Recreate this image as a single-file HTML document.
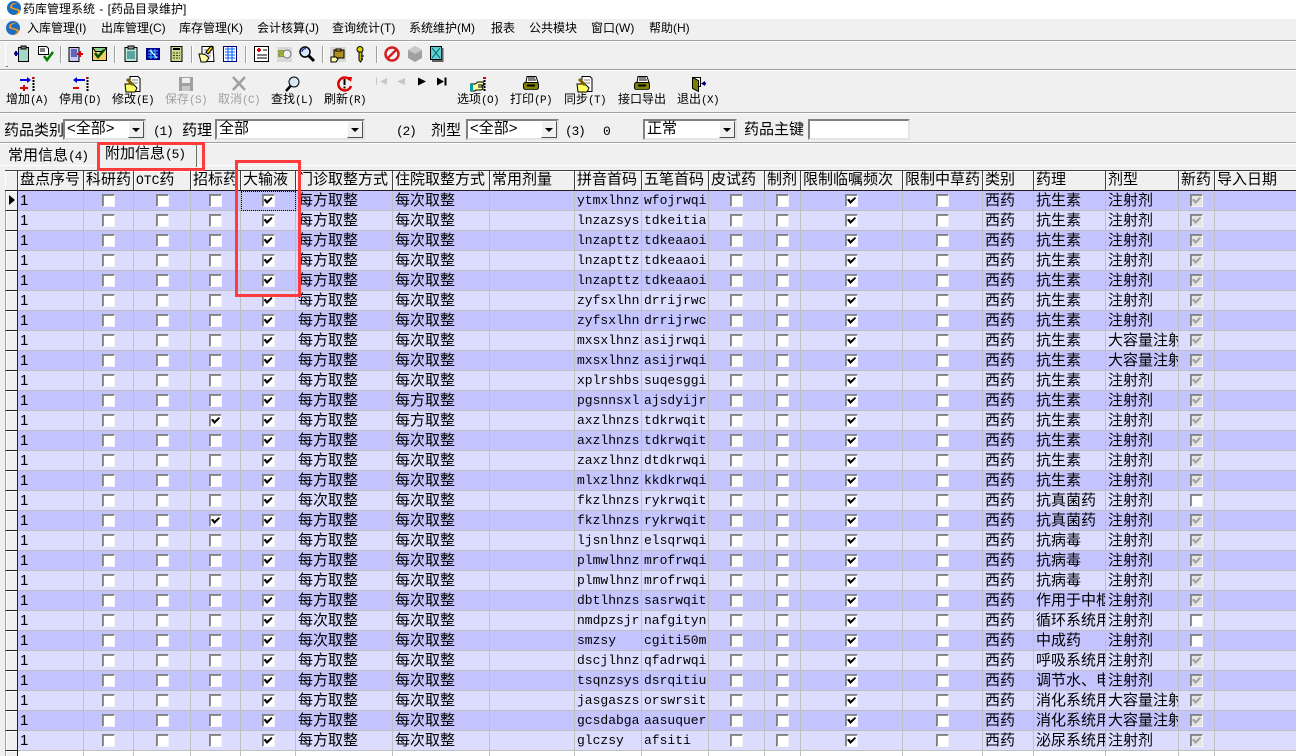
<!DOCTYPE html>
<html lang="zh"><head><meta charset="utf-8"><title>药库管理系统</title>
<style>
html,body{margin:0;padding:0;width:1296px;height:756px;overflow:hidden;background:#f0f0f0;color:#000;font-family:"Liberation Sans","WenQuanYi Zen Hei","Noto Sans CJK SC",sans-serif;font-size:12px}
#w{position:relative;width:1296px;height:756px;overflow:hidden;background:#f0f0f0}
.a{position:absolute;white-space:nowrap}
.ln{position:absolute;left:0;width:1296px;height:1px;background:#a0a0a0;box-shadow:0 1px 0 #fff}
.m{top:21px;font-size:12px;line-height:14px}
.v{position:absolute;top:46px;width:1px;height:17px;background:#a0a0a0;box-shadow:1px 0 0 #fff}
.t{top:91px;font-size:12px;line-height:16px}
.t b{font:400 11px "Liberation Mono",monospace;letter-spacing:-.6px}
.t.o{color:#a0a0a0}
.f{top:122px;font-size:15px;line-height:18px}
.f b{font:400 13px "Liberation Mono",monospace;letter-spacing:-1.3px}
.cb{position:absolute;top:119px;height:21px;box-sizing:border-box;background:#fff;border:2px solid #808080;border-right-color:#e4e4e4;border-bottom-color:#e4e4e4;font-size:15px;line-height:16px;padding-left:2px;white-space:nowrap}
.cb u{position:absolute;right:0;top:0;width:16px;height:17px;background:#f0f0f0;box-sizing:border-box;border:1px solid;border-color:#fff #505050 #505050 #fff}
.cb u:after{content:"";position:absolute;left:3px;top:6px;border:4px solid transparent;border-top:4px solid #000;border-bottom:0}
table{position:absolute;left:5px;top:170px;border-collapse:separate;border-spacing:0;table-layout:fixed;width:1381px;font-size:15px;line-height:19px;background:#fff}
td,th{box-sizing:border-box;height:20px;padding:0 0 0 2px;border-right:1px solid #c0c0c0;border-bottom:1px solid #c0c0c0;overflow:hidden;white-space:nowrap;font-weight:400;text-align:left;vertical-align:top}
th{height:21px;background:#f0f0f0;border-top:1px solid #404040;border-bottom:1px solid #202020;border-right:1px solid #404040;box-shadow:inset 1px 1px 0 #fff;padding-left:2px;line-height:18px}
tr td:first-child{background:#f0f0f0;border-right:1px solid #202020;border-bottom:1px solid #202020;border-left:1px solid #a0a0a0;padding:0;position:relative;box-shadow:inset 1px 1px 0 #fff}
tr{background:#dcdcff}
tr.d{background:#c4c4ff}
tr.w{background:#fff}
td.p{font:13px/19px "Liberation Mono",monospace}
td.k{padding:3px 0 0;text-align:center;line-height:13px}
td.s{outline:1px dotted #000;outline-offset:-1px}
i{display:inline-block;position:relative;width:13px;height:13px;box-sizing:border-box;background:#fff;border:1px solid;border-color:#808080 #f4f4f4 #f4f4f4 #808080;box-shadow:inset 1px 1px 0 #909090;vertical-align:top}
i.c:after,i.g:after{content:"";position:absolute;left:1px;top:2px;width:9px;height:7px;background:#000;clip-path:polygon(0 40%,25% 25%,38% 55%,88% 0,100% 20%,38% 100%)}
i.g{background:#e6e6e6}
i.g:after{background:#a0a0a0}
.r{position:absolute;border:3px solid #ff3b3b;box-sizing:border-box}
svg{position:absolute;left:0;top:0}
</style></head><body><div id="w">
<div class="a" style="left:0;top:0;width:1296px;height:19px;background:#fff"></div>
<div class="a" style="left:23px;top:1px;font-size:12px;line-height:16px;word-spacing:1px">药库管理系统 - [药品目录维护]</div>
<div class="a m" style="left:27px">入库管理(I)</div>
<div class="a m" style="left:101px">出库管理(C)</div>
<div class="a m" style="left:179px">库存管理(K)</div>
<div class="a m" style="left:257px">会计核算(J)</div>
<div class="a m" style="left:332px">查询统计(T)</div>
<div class="a m" style="left:409px">系统维护(M)</div>
<div class="a m" style="left:491px">报表</div>
<div class="a m" style="left:529px">公共模块</div>
<div class="a m" style="left:591px">窗口(W)</div>
<div class="a m" style="left:649px">帮助(H)</div>
<div class="ln" style="top:40px"></div>
<div class="ln" style="top:69px"></div>
<div class="ln" style="top:112px"></div>
<div class="ln" style="top:142px"></div>
<div class="a" style="left:5px;top:43px;width:2px;height:22px;border:1px solid;border-color:#fff #808080 #808080 #fff;border-right:0"></div>
<div class="v" style="left:60px"></div><div class="v" style="left:114px"></div><div class="v" style="left:191px"></div><div class="v" style="left:245px"></div><div class="v" style="left:322px"></div><div class="v" style="left:376px"></div>
<div class="a t" style="left:6px">增加<b>(A)</b></div>
<div class="a t" style="left:59px">停用<b>(D)</b></div>
<div class="a t" style="left:112px">修改<b>(E)</b></div>
<div class="a t o" style="left:165px">保存<b>(S)</b></div>
<div class="a t o" style="left:218px">取消<b>(C)</b></div>
<div class="a t" style="left:271px">查找<b>(L)</b></div>
<div class="a t" style="left:324px">刷新<b>(R)</b></div>
<div class="a t" style="left:457px">选项<b>(O)</b></div>
<div class="a t" style="left:510px">打印<b>(P)</b></div>
<div class="a t" style="left:564px">同步<b>(T)</b></div>
<div class="a t" style="left:618px">接口导出</div>
<div class="a t" style="left:677px">退出<b>(X)</b></div>
<div class="a f" style="left:4px">药品类别</div>
<div class="cb" style="left:63px;width:83px">&lt;全部&gt;<u></u></div>
<div class="a f" style="left:153px"><b>(1)</b></div>
<div class="a f" style="left:182px">药理</div>
<div class="cb" style="left:215px;width:150px">全部<u></u></div>
<div class="a f" style="left:396px"><b>(2)</b></div>
<div class="a f" style="left:431px">剂型</div>
<div class="cb" style="left:466px;width:93px">&lt;全部&gt;<u></u></div>
<div class="a f" style="left:565px"><b>(3)</b></div>
<div class="a f" style="left:603px"><b>0</b></div>
<div class="cb" style="left:643px;width:94px">正常<u></u></div>
<div class="a f" style="left:744px;top:121px">药品主键</div>
<div class="cb" style="left:808px;width:102px"></div>
<div class="a" style="left:0;top:165px;width:1296px;height:1px;background:#fff"></div>
<div class="a" style="left:8px;top:147px;font-size:15px;line-height:18px">常用信息<span style="font:13px 'Liberation Mono',monospace;letter-spacing:-1.2px">(4)</span></div>
<div class="a" style="left:97px;top:143px;width:98px;height:23px;background:#f0f0f0;border-left:1px solid #fff;border-top:1px solid #fff;border-right:1px solid #707070"></div>
<div class="a" style="left:105px;top:145px;font-size:15px;line-height:18px">附加信息<span style="font:13px 'Liberation Mono',monospace;letter-spacing:-1.2px">(5)</span></div>

<table><colgroup><col style="width:13px"><col style="width:66px"><col style="width:50px"><col style="width:57px"><col style="width:50px"><col style="width:55px"><col style="width:97px"><col style="width:97px"><col style="width:85px"><col style="width:67px"><col style="width:67px"><col style="width:56px"><col style="width:36px"><col style="width:102px"><col style="width:80px"><col style="width:51px"><col style="width:72px"><col style="width:73px"><col style="width:36px"><col style="width:171px"></colgroup>
<tr><th></th><th>盘点序号</th><th>科研药</th><th><span style="font:13px 'Liberation Mono',monospace">OTC</span>药</th><th>招标药</th><th>大输液</th><th>门诊取整方式</th><th>住院取整方式</th><th>常用剂量</th><th>拼音首码</th><th>五笔首码</th><th>皮试药</th><th>制剂</th><th>限制临嘱频次</th><th>限制中草药</th><th>类别</th><th>药理</th><th>剂型</th><th>新药</th><th>导入日期</th></tr>
<tr class="d"><td><span style="position:absolute;left:3px;top:4px;border:5px solid transparent;border-left:6px solid #000;border-right:0"></span></td><td>1</td><td class="k"><i></i></td><td class="k"><i></i></td><td class="k"><i></i></td><td class="k s"><i class="c"></i></td><td>每方取整</td><td>每次取整</td><td></td><td class="p">ytmxlhnz</td><td class="p">wfojrwqi</td><td class="k"><i></i></td><td class="k"><i></i></td><td class="k"><i class="c"></i></td><td class="k"><i></i></td><td>西药</td><td>抗生素</td><td>注射剂</td><td class="k"><i class="g"></i></td><td></td></tr>
<tr><td></td><td>1</td><td class="k"><i></i></td><td class="k"><i></i></td><td class="k"><i></i></td><td class="k"><i class="c"></i></td><td>每方取整</td><td>每次取整</td><td></td><td class="p">lnzazsys</td><td class="p">tdkeitia</td><td class="k"><i></i></td><td class="k"><i></i></td><td class="k"><i class="c"></i></td><td class="k"><i></i></td><td>西药</td><td>抗生素</td><td>注射剂</td><td class="k"><i class="g"></i></td><td></td></tr>
<tr class="d"><td></td><td>1</td><td class="k"><i></i></td><td class="k"><i></i></td><td class="k"><i></i></td><td class="k"><i class="c"></i></td><td>每方取整</td><td>每次取整</td><td></td><td class="p">lnzapttz</td><td class="p">tdkeaaoi</td><td class="k"><i></i></td><td class="k"><i></i></td><td class="k"><i class="c"></i></td><td class="k"><i></i></td><td>西药</td><td>抗生素</td><td>注射剂</td><td class="k"><i class="g"></i></td><td></td></tr>
<tr><td></td><td>1</td><td class="k"><i></i></td><td class="k"><i></i></td><td class="k"><i></i></td><td class="k"><i class="c"></i></td><td>每方取整</td><td>每次取整</td><td></td><td class="p">lnzapttz</td><td class="p">tdkeaaoi</td><td class="k"><i></i></td><td class="k"><i></i></td><td class="k"><i class="c"></i></td><td class="k"><i></i></td><td>西药</td><td>抗生素</td><td>注射剂</td><td class="k"><i class="g"></i></td><td></td></tr>
<tr class="d"><td></td><td>1</td><td class="k"><i></i></td><td class="k"><i></i></td><td class="k"><i></i></td><td class="k"><i class="c"></i></td><td>每方取整</td><td>每次取整</td><td></td><td class="p">lnzapttz</td><td class="p">tdkeaaoi</td><td class="k"><i></i></td><td class="k"><i></i></td><td class="k"><i class="c"></i></td><td class="k"><i></i></td><td>西药</td><td>抗生素</td><td>注射剂</td><td class="k"><i class="g"></i></td><td></td></tr>
<tr><td></td><td>1</td><td class="k"><i></i></td><td class="k"><i></i></td><td class="k"><i></i></td><td class="k"><i class="c"></i></td><td>每方取整</td><td>每次取整</td><td></td><td class="p">zyfsxlhn</td><td class="p">drrijrwc</td><td class="k"><i></i></td><td class="k"><i></i></td><td class="k"><i class="c"></i></td><td class="k"><i></i></td><td>西药</td><td>抗生素</td><td>注射剂</td><td class="k"><i class="g"></i></td><td></td></tr>
<tr class="d"><td></td><td>1</td><td class="k"><i></i></td><td class="k"><i></i></td><td class="k"><i></i></td><td class="k"><i class="c"></i></td><td>每方取整</td><td>每次取整</td><td></td><td class="p">zyfsxlhn</td><td class="p">drrijrwc</td><td class="k"><i></i></td><td class="k"><i></i></td><td class="k"><i class="c"></i></td><td class="k"><i></i></td><td>西药</td><td>抗生素</td><td>注射剂</td><td class="k"><i class="g"></i></td><td></td></tr>
<tr><td></td><td>1</td><td class="k"><i></i></td><td class="k"><i></i></td><td class="k"><i></i></td><td class="k"><i class="c"></i></td><td>每方取整</td><td>每次取整</td><td></td><td class="p">mxsxlhnz</td><td class="p">asijrwqi</td><td class="k"><i></i></td><td class="k"><i></i></td><td class="k"><i class="c"></i></td><td class="k"><i></i></td><td>西药</td><td>抗生素</td><td>大容量注射</td><td class="k"><i class="g"></i></td><td></td></tr>
<tr class="d"><td></td><td>1</td><td class="k"><i></i></td><td class="k"><i></i></td><td class="k"><i></i></td><td class="k"><i class="c"></i></td><td>每方取整</td><td>每次取整</td><td></td><td class="p">mxsxlhnz</td><td class="p">asijrwqi</td><td class="k"><i></i></td><td class="k"><i></i></td><td class="k"><i class="c"></i></td><td class="k"><i></i></td><td>西药</td><td>抗生素</td><td>大容量注射</td><td class="k"><i class="g"></i></td><td></td></tr>
<tr><td></td><td>1</td><td class="k"><i></i></td><td class="k"><i></i></td><td class="k"><i></i></td><td class="k"><i class="c"></i></td><td>每方取整</td><td>每次取整</td><td></td><td class="p">xplrshbs</td><td class="p">suqesggi</td><td class="k"><i></i></td><td class="k"><i></i></td><td class="k"><i class="c"></i></td><td class="k"><i></i></td><td>西药</td><td>抗生素</td><td>注射剂</td><td class="k"><i class="g"></i></td><td></td></tr>
<tr class="d"><td></td><td>1</td><td class="k"><i></i></td><td class="k"><i></i></td><td class="k"><i></i></td><td class="k"><i class="c"></i></td><td>每方取整</td><td>每方取整</td><td></td><td class="p">pgsnnsxl</td><td class="p">ajsdyijr</td><td class="k"><i></i></td><td class="k"><i></i></td><td class="k"><i class="c"></i></td><td class="k"><i></i></td><td>西药</td><td>抗生素</td><td>注射剂</td><td class="k"><i class="g"></i></td><td></td></tr>
<tr><td></td><td>1</td><td class="k"><i></i></td><td class="k"><i></i></td><td class="k"><i class="c"></i></td><td class="k"><i class="c"></i></td><td>每方取整</td><td>每方取整</td><td></td><td class="p">axzlhnzs</td><td class="p">tdkrwqit</td><td class="k"><i></i></td><td class="k"><i></i></td><td class="k"><i class="c"></i></td><td class="k"><i></i></td><td>西药</td><td>抗生素</td><td>注射剂</td><td class="k"><i class="g"></i></td><td></td></tr>
<tr class="d"><td></td><td>1</td><td class="k"><i></i></td><td class="k"><i></i></td><td class="k"><i></i></td><td class="k"><i class="c"></i></td><td>每方取整</td><td>每次取整</td><td></td><td class="p">axzlhnzs</td><td class="p">tdkrwqit</td><td class="k"><i></i></td><td class="k"><i></i></td><td class="k"><i class="c"></i></td><td class="k"><i></i></td><td>西药</td><td>抗生素</td><td>注射剂</td><td class="k"><i class="g"></i></td><td></td></tr>
<tr><td></td><td>1</td><td class="k"><i></i></td><td class="k"><i></i></td><td class="k"><i></i></td><td class="k"><i class="c"></i></td><td>每方取整</td><td>每次取整</td><td></td><td class="p">zaxzlhnz</td><td class="p">dtdkrwqi</td><td class="k"><i></i></td><td class="k"><i></i></td><td class="k"><i class="c"></i></td><td class="k"><i></i></td><td>西药</td><td>抗生素</td><td>注射剂</td><td class="k"><i class="g"></i></td><td></td></tr>
<tr class="d"><td></td><td>1</td><td class="k"><i></i></td><td class="k"><i></i></td><td class="k"><i></i></td><td class="k"><i class="c"></i></td><td>每方取整</td><td>每次取整</td><td></td><td class="p">mlxzlhnz</td><td class="p">kkdkrwqi</td><td class="k"><i></i></td><td class="k"><i></i></td><td class="k"><i class="c"></i></td><td class="k"><i></i></td><td>西药</td><td>抗生素</td><td>注射剂</td><td class="k"><i class="g"></i></td><td></td></tr>
<tr><td></td><td>1</td><td class="k"><i></i></td><td class="k"><i></i></td><td class="k"><i></i></td><td class="k"><i class="c"></i></td><td>每次取整</td><td>每次取整</td><td></td><td class="p">fkzlhnzs</td><td class="p">rykrwqit</td><td class="k"><i></i></td><td class="k"><i></i></td><td class="k"><i class="c"></i></td><td class="k"><i></i></td><td>西药</td><td>抗真菌药</td><td>注射剂</td><td class="k"><i></i></td><td></td></tr>
<tr class="d"><td></td><td>1</td><td class="k"><i></i></td><td class="k"><i></i></td><td class="k"><i class="c"></i></td><td class="k"><i class="c"></i></td><td>每方取整</td><td>每次取整</td><td></td><td class="p">fkzlhnzs</td><td class="p">rykrwqit</td><td class="k"><i></i></td><td class="k"><i></i></td><td class="k"><i class="c"></i></td><td class="k"><i></i></td><td>西药</td><td>抗真菌药</td><td>注射剂</td><td class="k"><i class="g"></i></td><td></td></tr>
<tr><td></td><td>1</td><td class="k"><i></i></td><td class="k"><i></i></td><td class="k"><i></i></td><td class="k"><i class="c"></i></td><td>每方取整</td><td>每次取整</td><td></td><td class="p">ljsnlhnz</td><td class="p">elsqrwqi</td><td class="k"><i></i></td><td class="k"><i></i></td><td class="k"><i class="c"></i></td><td class="k"><i></i></td><td>西药</td><td>抗病毒</td><td>注射剂</td><td class="k"><i class="g"></i></td><td></td></tr>
<tr class="d"><td></td><td>1</td><td class="k"><i></i></td><td class="k"><i></i></td><td class="k"><i></i></td><td class="k"><i class="c"></i></td><td>每方取整</td><td>每次取整</td><td></td><td class="p">plmwlhnz</td><td class="p">mrofrwqi</td><td class="k"><i></i></td><td class="k"><i></i></td><td class="k"><i class="c"></i></td><td class="k"><i></i></td><td>西药</td><td>抗病毒</td><td>注射剂</td><td class="k"><i class="g"></i></td><td></td></tr>
<tr><td></td><td>1</td><td class="k"><i></i></td><td class="k"><i></i></td><td class="k"><i></i></td><td class="k"><i class="c"></i></td><td>每方取整</td><td>每次取整</td><td></td><td class="p">plmwlhnz</td><td class="p">mrofrwqi</td><td class="k"><i></i></td><td class="k"><i></i></td><td class="k"><i class="c"></i></td><td class="k"><i></i></td><td>西药</td><td>抗病毒</td><td>注射剂</td><td class="k"><i class="g"></i></td><td></td></tr>
<tr class="d"><td></td><td>1</td><td class="k"><i></i></td><td class="k"><i></i></td><td class="k"><i></i></td><td class="k"><i class="c"></i></td><td>每方取整</td><td>每次取整</td><td></td><td class="p">dbtlhnzs</td><td class="p">sasrwqit</td><td class="k"><i></i></td><td class="k"><i></i></td><td class="k"><i class="c"></i></td><td class="k"><i></i></td><td>西药</td><td>作用于中枢</td><td>注射剂</td><td class="k"><i class="g"></i></td><td></td></tr>
<tr><td></td><td>1</td><td class="k"><i></i></td><td class="k"><i></i></td><td class="k"><i></i></td><td class="k"><i class="c"></i></td><td>每次取整</td><td>每次取整</td><td></td><td class="p">nmdpzsjr</td><td class="p">nafgityn</td><td class="k"><i></i></td><td class="k"><i></i></td><td class="k"><i class="c"></i></td><td class="k"><i></i></td><td>西药</td><td>循环系统用</td><td>注射剂</td><td class="k"><i></i></td><td></td></tr>
<tr class="d"><td></td><td>1</td><td class="k"><i></i></td><td class="k"><i></i></td><td class="k"><i></i></td><td class="k"><i class="c"></i></td><td>每次取整</td><td>每次取整</td><td></td><td class="p">smzsy</td><td class="p">cgiti50m</td><td class="k"><i></i></td><td class="k"><i></i></td><td class="k"><i class="c"></i></td><td class="k"><i></i></td><td>西药</td><td>中成药</td><td>注射剂</td><td class="k"><i></i></td><td></td></tr>
<tr><td></td><td>1</td><td class="k"><i></i></td><td class="k"><i></i></td><td class="k"><i></i></td><td class="k"><i class="c"></i></td><td>每方取整</td><td>每次取整</td><td></td><td class="p">dscjlhnz</td><td class="p">qfadrwqi</td><td class="k"><i></i></td><td class="k"><i></i></td><td class="k"><i class="c"></i></td><td class="k"><i></i></td><td>西药</td><td>呼吸系统用</td><td>注射剂</td><td class="k"><i class="g"></i></td><td></td></tr>
<tr class="d"><td></td><td>1</td><td class="k"><i></i></td><td class="k"><i></i></td><td class="k"><i></i></td><td class="k"><i class="c"></i></td><td>每方取整</td><td>每次取整</td><td></td><td class="p">tsqnzsys</td><td class="p">dsrqitiu</td><td class="k"><i></i></td><td class="k"><i></i></td><td class="k"><i class="c"></i></td><td class="k"><i></i></td><td>西药</td><td>调节水、电</td><td>注射剂</td><td class="k"><i class="g"></i></td><td></td></tr>
<tr><td></td><td>1</td><td class="k"><i></i></td><td class="k"><i></i></td><td class="k"><i></i></td><td class="k"><i class="c"></i></td><td>每方取整</td><td>每次取整</td><td></td><td class="p">jasgaszs</td><td class="p">orswrsit</td><td class="k"><i></i></td><td class="k"><i></i></td><td class="k"><i class="c"></i></td><td class="k"><i></i></td><td>西药</td><td>消化系统用</td><td>大容量注射</td><td class="k"><i class="g"></i></td><td></td></tr>
<tr class="d"><td></td><td>1</td><td class="k"><i></i></td><td class="k"><i></i></td><td class="k"><i></i></td><td class="k"><i class="c"></i></td><td>每方取整</td><td>每次取整</td><td></td><td class="p">gcsdabga</td><td class="p">aasuquer</td><td class="k"><i></i></td><td class="k"><i></i></td><td class="k"><i class="c"></i></td><td class="k"><i></i></td><td>西药</td><td>消化系统用</td><td>大容量注射</td><td class="k"><i class="g"></i></td><td></td></tr>
<tr><td></td><td>1</td><td class="k"><i></i></td><td class="k"><i></i></td><td class="k"><i></i></td><td class="k"><i class="c"></i></td><td>每方取整</td><td>每次取整</td><td></td><td class="p">glczsy</td><td class="p">afsiti</td><td class="k"><i></i></td><td class="k"><i></i></td><td class="k"><i class="c"></i></td><td class="k"><i></i></td><td>西药</td><td>泌尿系统用</td><td>注射剂</td><td class="k"><i class="g"></i></td><td></td></tr>
<tr class="w"><td></td><td></td><td></td><td></td><td></td><td></td><td></td><td></td><td></td><td></td><td></td><td></td><td></td><td></td><td></td><td></td><td></td><td></td><td></td><td></td></tr>
</table>
<div class="r" style="left:97px;top:142px;width:108px;height:29px"></div>
<div class="r" style="left:235px;top:160px;width:66px;height:137px"></div>

<svg width="1296" height="756" viewBox="0 0 1296 756">
<defs>
<g id="logo"><circle cx="7" cy="7" r="7" fill="#1c6fc0"/><path d="M12 2C7 1 3 3 3 6c0 3 8 2 8 5 0 1-2 2-4 3 4 0 6-2 6-4 0-3-8-2-8-5 0-1 2-2 5-3z" fill="#f39a1e"/></g>
<g id="prn"><path d="M4 .5h9l2 6H3z" fill="#fff" stroke="#000"/><path d="M5 2h7M5 4h8" stroke="#000"/><rect x=".5" y="6.500" width="15" height="7" rx="2" fill="#808000" stroke="#000"/><path d="M4 9.500h8" stroke="#000" stroke-width="2"/><path d="M2 13.500h12" stroke="#333"/></g>
<g id="hand"><path d="M1 5h4l3-2h5l1 3-2 1 1 3-2 1H6l-1 1H1z" fill="#ffff99" stroke="#000"/><rect x="0" y="5" width="3" height="7" fill="#00a0a0"/><path d="M8 6h5M8 8h4" stroke="#000"/></g>
</defs>
<use href="#logo" x="7" y="1"/><use href="#logo" x="6" y="21"/>

<g stroke="#000">
<path d="M18.500 47.500h10v14h-10z" fill="#a6d8c8"/><rect x="21" y="46" width="5" height="3" fill="#808080"/><path d="M16 51v5M14 53.500h5" stroke="#00008b" stroke-width="2"/>
<path d="M38.500 46.500h8l2 2v6h-10z" fill="#fff"/><path d="M40 49h5M40 51h5" stroke-width="1"/><path d="M44 56l3 4 6-8" fill="none" stroke="#008000" stroke-width="2.500"/>
<path d="M69 47.500h10v14H69z" fill="#c8c8f0"/><path d="M71 50h6M71 52h6M71 54h6M71 56h6" stroke="#000080"/><path d="M80 51v6M77 54h6" stroke="#e00000" stroke-width="2"/>
<path d="M92.500 47.500h14v13h-14z" fill="#f0d060"/><path d="M92.500 47.500h14l-3 4h-8z" fill="#90d090"/><path d="M95 53l3 4 6-7" fill="none" stroke="#005000" stroke-width="2.500"/>
<path d="M125 47.500h12v14h-12z" fill="#b8e8e0"/><rect x="128" y="46" width="6" height="3" fill="#a0a0a0"/><path d="M127 52h8M127 54h8M127 56h8M127 58h8" stroke="#006060"/>
<path d="M146.500 48.500h13v11h-13z" fill="#0000a0" stroke="#000080"/><path d="M148 51h10M148 54h10M148 57h10M151 49v10M155 49v10" stroke="#40c0ff"/><path d="M150 50l7 8" stroke="#fff"/>
<path d="M171 46.500h11v15h-11z" fill="#c8d890"/><path d="M173 49h7" stroke="#000" stroke-width="2"/><path d="M173 53h7M173 55.500h7M173 58h7" stroke="#404000" stroke-dasharray="2 1"/>
<path d="M202 46.500h11l1 15h-12z" fill="#fff"/><path d="M204 50h7M204 53h7M204 56h7" stroke="#808080"/><path d="M199 54h4l3 1 3 3-3 4h-5z" fill="#ffffa0"/><path d="M206 52l5-6 2 2-5 6z" fill="#ffd000"/>
<rect x="223.500" y="46.500" width="13" height="15" fill="#fff" stroke="#000080"/><path d="M225 49h10M225 52h10M225 55h10M225 58h10M228 47v14M232 47v14" stroke="#0060ff"/>
<rect x="254.500" y="46.500" width="14" height="15" fill="#fff"/><path d="M257 50h4M259 48v4" stroke="#e00000" stroke-width="2"/><path d="M263 50h4M257 55h10M257 58h10" stroke="#000"/>
</g>
<g transform="translate(277,46)"><rect x="0" y="1" width="15" height="15" fill="#d8d8d8"/><path d="M1 4h6v7H1z" fill="#7aa050"/><circle cx="10" cy="8" r="4" fill="#f0f0f0" stroke="#707070"/><path d="M2 6h4M3 9h3" stroke="#e0c000"/></g>
<g transform="translate(299,46)"><circle cx="6" cy="6" r="5" fill="#d8e8f8" stroke="#000" stroke-width="1.500"/><path d="M3 6a3 3 0 0 1 4-3" stroke="#000080" fill="none"/><path d="M10 10l5 5" stroke="#000" stroke-width="3"/></g>
<g transform="translate(330,46)"><rect x="0" y="1" width="16" height="15" fill="#d8d8d8"/><path d="M4 4h10v8H4z" fill="#b09020" stroke="#000"/><path d="M6 3h5v2H6z" fill="#e0c040" stroke="#000"/><path d="M1 11h5l2 2-2 3H1z" fill="#ffffa0" stroke="#000"/></g>
<g transform="translate(355,46)"><circle cx="5" cy="3.500" r="3" fill="#e0d000" stroke="#000"/><path d="M4 6h3v8l-1.500 2L4 14z" fill="#c8b800" stroke="#000"/><path d="M6 10h3M6 13h2" stroke="#000"/></g>
<g transform="translate(384,46)"><circle cx="8" cy="8" r="6.500" fill="#f4f4f4" stroke="#d02020" stroke-width="2.500"/><path d="M3.500 12.500l9-9" stroke="#d02020" stroke-width="2.500"/></g>
<path d="M415 46l7 4v8l-7 4-7-4v-8z" fill="#a0a0a0"/><path d="M415 46l7 4-7 4-7-4z" fill="#c8c8c8"/>
<g transform="translate(430,46)"><rect x=".5" y=".5" width="11" height="13" fill="#60d0d0" stroke="#000"/><path d="M2 2l8 10M10 2L2 12" stroke="#006060"/><path d="M12.500 2v13H2" stroke="#606060" stroke-width="2" fill="none"/></g>

<g><path d="M20 80h8" stroke="#0000e0" stroke-width="2"/><path d="M27 77l4 3-4 3z" fill="#0000e0"/><path d="M20 88h8M24 85v6" stroke="#e00000" stroke-width="2"/><path d="M33.500 77v15" stroke="#000" stroke-width="2" stroke-dasharray="2 1"/><rect x="32" y="77" width="2" height="2" fill="#e00000"/></g>
<g><path d="M77 80h8" stroke="#0000e0" stroke-width="2"/><path d="M77 77l-4 3 4 3z" fill="#0000e0"/><path d="M73 88h6" stroke="#e00000" stroke-width="2"/><path d="M87.500 77v15" stroke="#000" stroke-width="2" stroke-dasharray="2 1"/><rect x="86" y="77" width="2" height="2" fill="#e00000"/></g>
<g transform="translate(125,76)"><path d="M5 .5h8l2 2v13H5z" fill="#fff" stroke="#000"/><path d="M7 4h6M7 7h6" stroke="#808080"/><path d="M0 8h5l4 1 3 3-2 4H1z" fill="#ffff60" stroke="#000"/><path d="M2 3l6 6" stroke="#806000" stroke-width="3"/></g>
<g><rect x="179" y="77" width="14" height="14" fill="#a0a0a0"/><rect x="182" y="78" width="8" height="5" fill="#f0f0f0"/><rect x="182" y="86" width="8" height="5" fill="#c8c8c8"/></g>
<path d="M233 77l12 13M245 77l-12 13" stroke="#a0a0a0" stroke-width="2.500"/>
<g transform="translate(285,76)"><circle cx="9" cy="6" r="5" fill="#d8e8f8" stroke="#000"/><path d="M5.500 10l-4.500 5" stroke="#000" stroke-width="2.500"/></g>
<g transform="translate(337,76)"><path d="M13 4a6.500 6.500 0 1 0 1 6" fill="none" stroke="#e00000" stroke-width="2.500"/><path d="M10 1l5 0-1 5z" fill="#e00000"/><path d="M7.500 3v6" stroke="#000" stroke-width="2"/><rect x="6.500" y="10.500" width="2" height="2"/></g>
<g fill="#c8c8c8"><path d="M376 85l0-8h1v8zM387 78v7l-7-3.500z"/><path d="M405 78v7l-8-3.500z"/></g>
<path d="M418 85.500v-8l8 4z" fill="#000"/>
<path d="M437 85.500v-8l7 4zM444.500 77.500h2v8h-2z" fill="#000"/>
<use href="#hand" x="470" y="79"/><path d="M484.500 77v15" stroke="#000" stroke-width="2" stroke-dasharray="2 1"/><rect x="483" y="77" width="3" height="2" fill="#e00000"/>
<use href="#prn" x="523" y="76"/><use href="#prn" x="634" y="76"/>
<g transform="translate(577,76)"><path d="M5 .5h8l2 2v13H5z" fill="#fff" stroke="#000"/><path d="M7 4h6M7 7h6" stroke="#808080"/><path d="M0 8h5l4 1 3 3-2 4H1z" fill="#ffff60" stroke="#000"/><path d="M2 3l6 6" stroke="#806000" stroke-width="3"/></g>
<g transform="translate(692,76)"><path d="M.5 1.500h8v9H7" fill="#fff" stroke="#000"/><path d="M.5 1.500l6 3v11l-6-3z" fill="#808000" stroke="#000"/><path d="M13 5v5l-4-2.500z" fill="#000080"/><path d="M12 6.500h2v2h-2z" fill="#000080"/></g>
</svg>
</div></body></html>
